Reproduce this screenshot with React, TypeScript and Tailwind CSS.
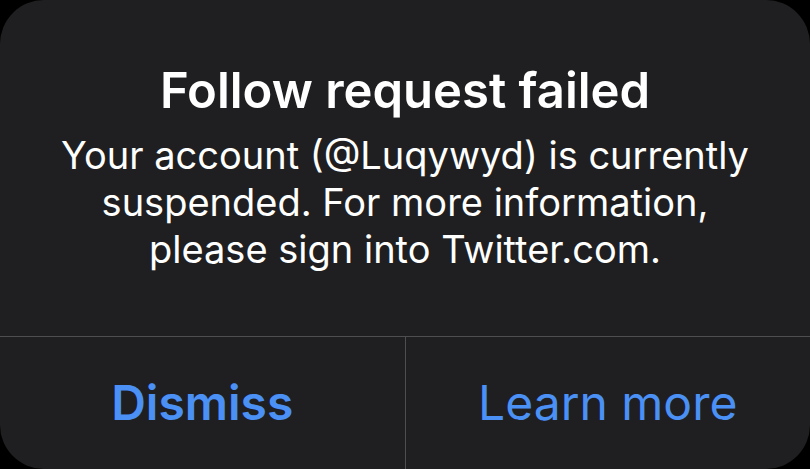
export default function App() {
  return (
    <div className="w-[810px] h-[469px] bg-black font-['Inter',sans-serif]">
      <div className="w-full h-full rounded-[44px] bg-[#1f1f21] flex flex-col overflow-hidden">
        <div className="h-[336px] flex flex-col items-center pt-[63px] text-white text-center">
          <p className="text-[49px] leading-[56px] font-semibold">Follow request failed</p>
          <p className="mt-[13px] text-[38px] leading-[47px]">
            Your account (@Luqywyd) is currently
            <br />
            suspended. For more information,
            <br />
            please sign into Twitter.com.
          </p>
        </div>
        <div className="flex-1 flex border-t border-[#4e4e52] text-[#4a90f5] text-[48px]">
          <button className="flex-1 flex items-center justify-center font-semibold border-r border-[#4e4e52]">
            Dismiss
          </button>
          <button className="flex-1 flex items-center justify-center">Learn more</button>
        </div>
      </div>
    </div>
  )
}
